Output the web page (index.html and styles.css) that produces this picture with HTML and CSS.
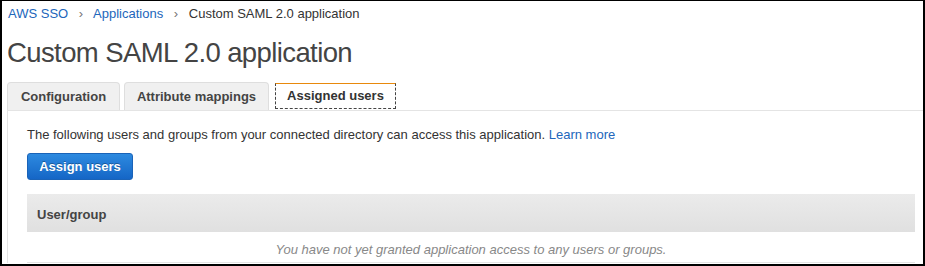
FILE: index.html
```html
<!DOCTYPE html>
<html lang="en">
<head>
    <meta charset="UTF-8">
    <title>Custom SAML 2.0 application</title>
    <link rel="stylesheet" href="styles.css">
</head>
<body>
    <div class="frame">
        <div class="breadcrumb">
            <a href="#">AWS SSO</a>
            <span class="sep">›</span>
            <a href="#">Applications</a>
            <span class="sep">›</span>
            <span class="current">Custom SAML 2.0 application</span>
        </div>
        <h1 class="title">Custom SAML 2.0 application</h1>
        <div class="tabs">
            <div class="tab tab-config">Configuration</div>
            <div class="tab tab-attrs">Attribute mappings</div>
            <div class="tab tab-users active">Assigned users</div>
        </div>
        <div class="panel">
            <p class="intro">The following users and groups from your connected directory can access this application. <a href="#">Learn more</a></p>
            <button class="primary">Assign users</button>
            <div class="table">
                <div class="table-head">User/group</div>
                <div class="table-empty">You have not yet granted application access to any users or groups.</div>
            </div>
        </div>
    </div>
</body>
</html>
```

FILE: styles.css
```css
html, body {
    margin: 0;
    background: #fff;
}
body {
    font-family: "Liberation Sans", Arial, sans-serif;
    color: #444;
}
a {
    color: #2266bb;
    text-decoration: none;
}
.frame {
    box-sizing: border-box;
    width: 925px;
    height: 266px;
    border: 2px solid #000;
    border-top-width: 1px;
    overflow: hidden;
}
.breadcrumb {
    font-size: 13px;
    line-height: 16px;
    padding: 5px 0 0 6px;
}
.breadcrumb .sep {
    color: #777;
    margin: 0 7px;
}
.breadcrumb .current {
    color: #333;
}
.title {
    margin: 14px 0 0 5px;
    font-size: 27.5px;
    font-weight: normal;
    letter-spacing: -0.6px;
    line-height: 34px;
    color: #444;
}
.tabs {
    display: flex;
    margin: 12px 0 0 5px;
    height: 28px;
}
.tab {
    box-sizing: border-box;
    height: 28px;
    font-size: 13px;
    font-weight: bold;
    line-height: 27px;
    text-align: center;
    color: #444;
    background: #f0f0f0;
    border: 1px solid #dedede;
    border-bottom: none;
    border-radius: 4px 4px 0 0;
}
.tab-config {
    width: 113px;
}
.tab-attrs {
    width: 145px;
    margin-left: 4px;
}
.tab-users {
    width: 121px;
    margin-left: 6px;
}
.tab.active {
    margin-top: 1px;
    height: 26px;
    line-height: 24px;
    background: #fff;
    border: 1px dashed #444;
    border-top: 1px solid #e8890c;
    border-radius: 0;
    color: #333;
}
.panel {
    margin-left: 5px;
    border-top: 1px solid #e4e4e4;
    border-left: 1px solid #e4e4e4;
    padding: 16px 8px 0 19px;
}
.intro {
    margin: 0;
    font-size: 13px;
    line-height: 16px;
    color: #333;
}
.primary {
    display: block;
    margin-top: 10px;
    width: 106px;
    height: 27px;
    padding: 0;
    font-family: inherit;
    font-size: 13px;
    font-weight: bold;
    color: #fff;
    text-shadow: 0 -1px 0 rgba(0, 0, 0, 0.3);
    background: linear-gradient(#2d8ae0, #1566c6);
    border: 1px solid #1a63b8;
    border-radius: 3px;
}
.table {
    margin-top: 14px;
}
.table-head {
    box-sizing: border-box;
    height: 38px;
    padding: 2px 0 0 10px;
    line-height: 38px;
    font-size: 13px;
    font-weight: bold;
    color: #444;
    background: linear-gradient(#ebebeb, #e0e0e0);
}
.table-empty {
    height: 30px;
    line-height: 36px;
    text-align: center;
    font-size: 13px;
    font-style: italic;
    color: #888;
    border-bottom: 1px solid #e4e4e4;
}
```
